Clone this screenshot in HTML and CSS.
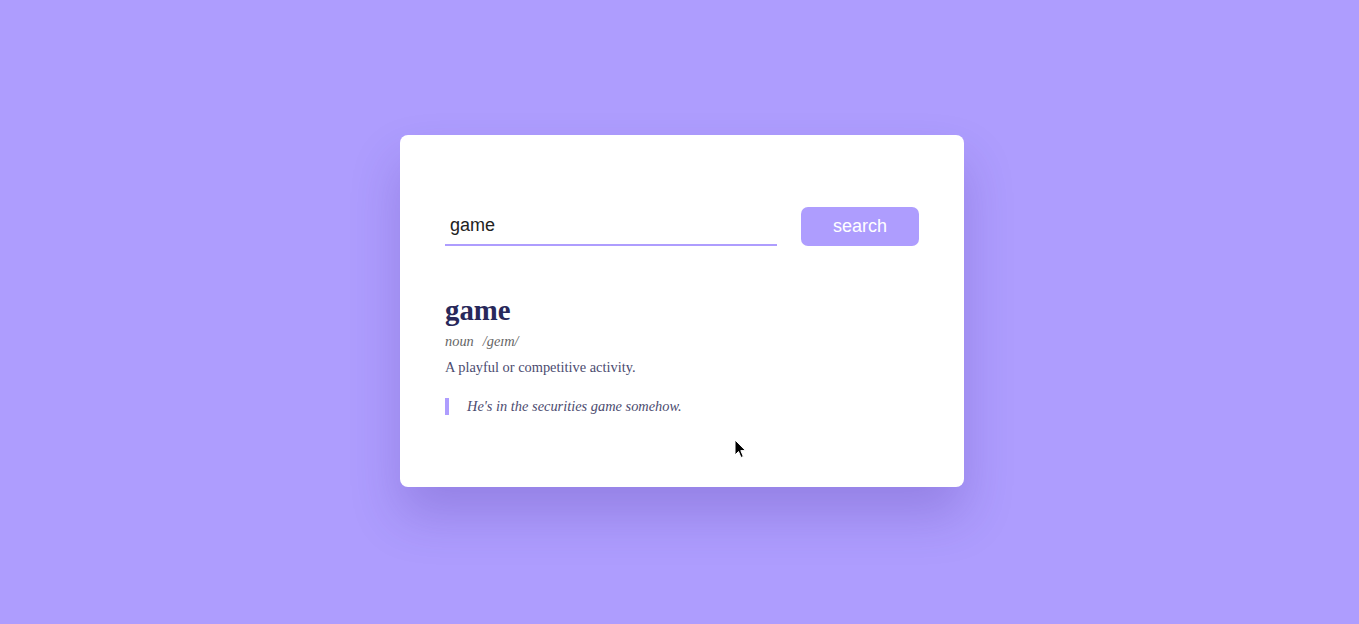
FILE: index.html
```html
<!DOCTYPE html>
<html lang="en">
<head>
<meta charset="utf-8">
<title>Dictionary</title>
<link rel="stylesheet" href="styles.css">
</head>
<body>
<main class="card">
  <form class="search-row">
    <input class="search-input" type="text" value="game">
    <button class="search-btn" type="button">search</button>
  </form>
  <section class="entry">
    <h1 class="word">game</h1>
    <p class="meta"><span class="pos">noun</span><span class="phonetic">/geɪm/</span></p>
    <p class="definition">A playful or competitive activity.</p>
    <blockquote class="example">He's in the securities game somehow.</blockquote>
  </section>
  <svg class="cursor" width="13" height="20" viewBox="0 0 13 20" aria-hidden="true">
    <path d="M1 1 L1 16 L4.5 12.5 L7 18.5 L9.3 17.5 L6.8 11.6 L11.5 11.6 Z" fill="#000" stroke="#fff" stroke-width="1" stroke-linejoin="round"/>
  </svg>
</main>
</body>
</html>
```

FILE: styles.css
```css
* { box-sizing: border-box; }
html, body { margin: 0; padding: 0; }
body {
  background: #ae9dfe;
  height: 624px;
  display: flex;
  align-items: center;
  justify-content: center;
  font-family: "Liberation Serif", "Times New Roman", serif;
}
.card {
  position: relative;
  width: 564px;
  height: 352px;
  margin-left: 5px;
  margin-bottom: 2px;
  background: #ffffff;
  border-radius: 8px;
  padding: 72px 45px 40px;
  box-shadow: 0 28px 50px rgba(60, 30, 140, 0.22);
}
.search-row {
  display: flex;
  gap: 24px;
  margin: 0;
}
.search-input {
  flex: 1;
  height: 39px;
  border: none;
  border-bottom: 2px solid #ae9dfe;
  outline: none;
  padding: 0 5px;
  font-family: "Liberation Sans", Arial, sans-serif;
  font-size: 18px;
  color: #222;
  background: transparent;
}
.search-btn {
  width: 118px;
  height: 39px;
  border: none;
  border-radius: 7px;
  background: #ae9dfe;
  color: #fff;
  font-family: "Liberation Sans", Arial, sans-serif;
  font-size: 18px;
  padding: 0;
}
.entry { margin-top: 47px; }
.word {
  margin: 0;
  font-size: 28.8px;
  font-weight: bold;
  color: #28285a;
  line-height: 34px;
}
.meta {
  margin: 4px 0 0;
  font-style: italic;
  font-size: 14.4px;
  line-height: 20px;
  color: #666;
}
.pos { margin-right: 9px; }
.definition {
  margin: 6px 0 0;
  font-size: 14.4px;
  line-height: 20px;
  color: #4c4c70;
}
.example {
  margin: 21px 0 0;
  border-left: 4px solid #ae9dfe;
  padding-left: 18px;
  font-style: italic;
  font-size: 14.4px;
  line-height: 17px;
  color: #4c4c70;
}
.cursor {
  position: absolute;
  left: 334px;
  top: 304px;
  pointer-events: none;
}
```
